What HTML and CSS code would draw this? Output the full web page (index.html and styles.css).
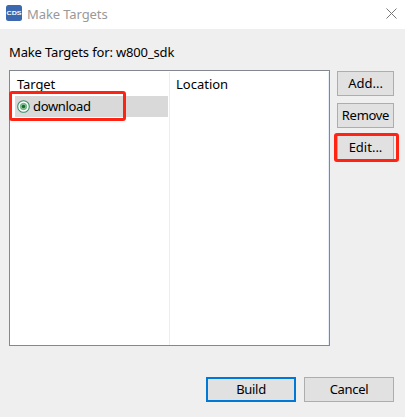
FILE: index.html
```html
<!DOCTYPE html>
<html lang="en">
<head>
<meta charset="utf-8">
<title>Make Targets</title>
<link rel="stylesheet" href="styles.css">
</head>
<body>
<div class="dialog">
  <header class="titlebar">
    <svg class="logo" width="16" height="16" viewBox="0 0 16 16">
      <rect width="16" height="16" rx="2.5" fill="#3c68b0"/>
      <text x="8" y="10" text-anchor="middle" textLength="15" lengthAdjust="spacingAndGlyphs" class="logo-text">CDS</text>
    </svg>
    <span class="title">Make Targets</span>
    <svg class="close" width="11" height="11" viewBox="0 0 11 11"><path d="M.5.5l10 10M10.5.5l-10 10" stroke="#777" stroke-width="1" fill="none"/></svg>
  </header>
  <div class="caption">Make Targets for: w800_sdk</div>
  <main class="content">
    <div class="table">
      <div class="col target">
        <div class="head">Target</div>
        <div class="row">
          <svg width="13" height="13" viewBox="0 0 13 13"><circle cx="6.5" cy="6.5" r="5.8" fill="#fff" stroke="#2f9360" stroke-width="1.1"/><circle cx="6.5" cy="6.5" r="3.2" fill="#8fc49b" stroke="#4ea56e" stroke-width=".8"/><circle cx="6.5" cy="6.5" r="1.8" fill="#1d6b28"/></svg>
          <span class="name">download</span>
        </div>
        <div class="mark mark-row"></div>
      </div>
      <div class="col location"><div class="head">Location</div></div>
    </div>
    <div class="side">
      <button class="btn">Add...</button>
      <button class="btn remove">Remove</button>
      <div class="edit"><button class="btn">Edit...</button><div class="mark mark-edit"></div></div>
    </div>
  </main>
  <footer class="footer">
    <button class="btn primary">Build</button>
    <button class="btn">Cancel</button>
  </footer>
</div>
</body>
</html>
```
FILE: styles.css
```css
* { box-sizing: border-box; }
body { margin: 0; font: 13px/18px "Noto Sans", sans-serif; color: #000; }
.dialog { width: 405px; height: 417px; background: #efefef; overflow: hidden; }
.titlebar { height: 29px; background: #fff; display: flex; align-items: center; padding: 0 8px 3px 6px; color: #999; }
.logo-text { font: bold 6px "Liberation Sans", sans-serif; fill: #fff; }
.title { margin-left: 5px; padding-top: 1px; flex: 1; letter-spacing: -.1px; }
.caption { padding: 14px 9px 0; height: 41px; letter-spacing: -.15px; }
.content { display: flex; gap: 7px; padding: 0 11px 0 9px; height: 276px; }
.table { width: 321px; border: 1px solid #828790; background: #fff; display: flex; }
.col { position: relative; border-right: 1px solid #e8eef7; margin-top: 1px; }
.target { width: 160px; }
.location { width: 159px; }
.head { padding: 3px 0 0 6px; height: 24px; }
.target .head { padding-left: 7px; letter-spacing: -.1px; }
.row { height: 21px; margin: 0 1px 0 5px; padding-left: 2px; background: #d9d9d9; display: flex; align-items: center; gap: 3px; }
.name { padding-bottom: 2px; letter-spacing: -.35px; }
.mark { position: absolute; border: 3px solid #ff2314; border-radius: 3px; }
.mark-row { left: -1px; top: 19px; width: 117px; height: 30px; }
.side { padding-top: 1px; width: 57px; display: flex; flex-direction: column; gap: 7px; }
.btn { font: inherit; height: 25px; width: 100%; padding: 0 0 2px; background: #e1e1e1; border: 1px solid #adadad; color: #000; display: block; }
.remove { letter-spacing: -.3px; }
.edit { position: relative; }
.mark-edit { left: -3px; top: -2px; width: 65px; height: 29px; }
.footer { display: flex; justify-content: flex-end; gap: 8px; padding: 31px 11px 0; }
.footer .btn { width: 90px; letter-spacing: -.3px; }
.footer .primary { border: 2px solid #0078d7; }
```
